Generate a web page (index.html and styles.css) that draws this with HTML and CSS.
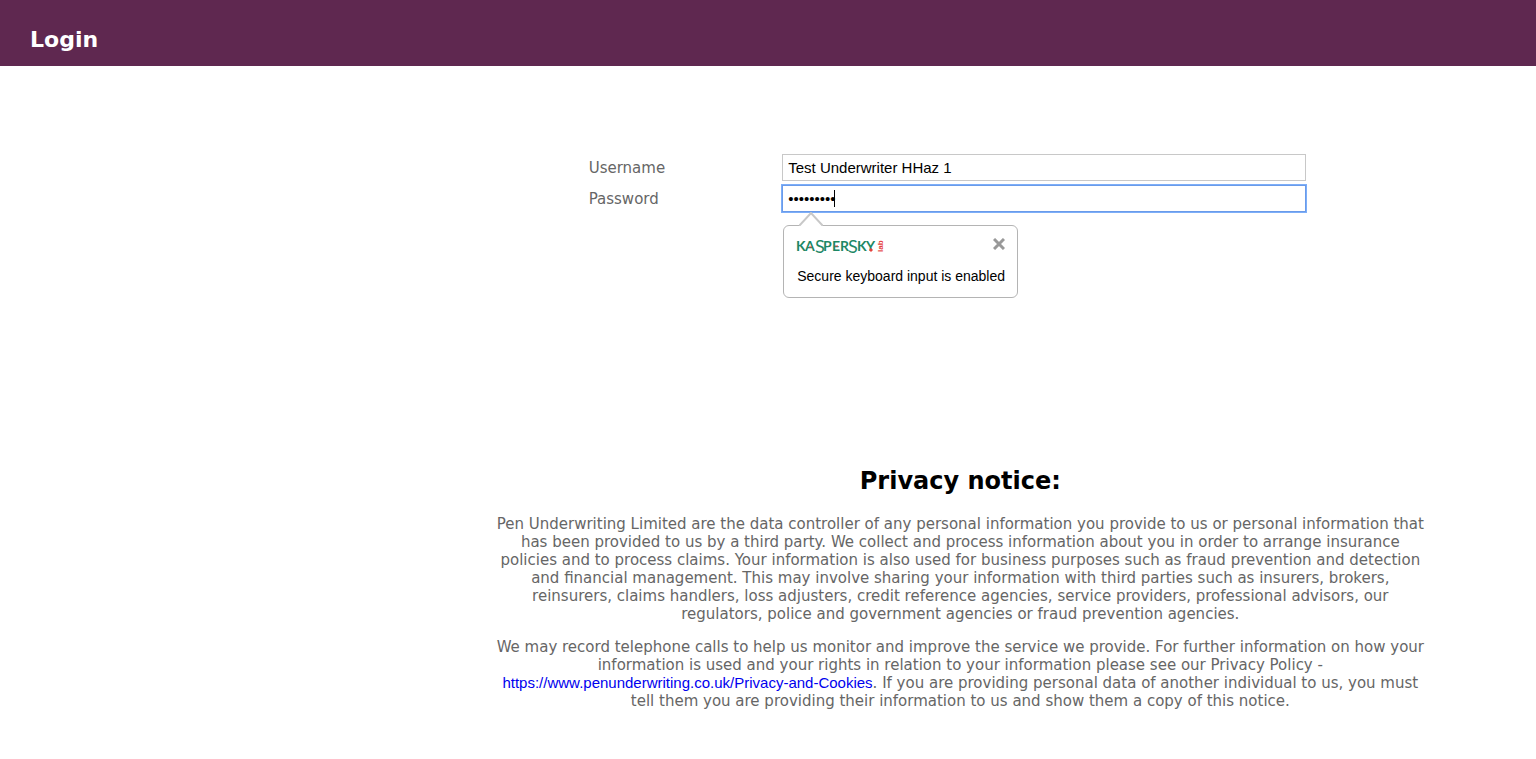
FILE: index.html
```html
<!DOCTYPE html>
<html lang="en">
<head>
<meta charset="utf-8">
<title>Login</title>
<link rel="stylesheet" href="styles.css">
</head>
<body>
<header class="banner">
  <h1 class="banner-title">Login</h1>
</header>
<main class="content">
  <form class="login-form">
    <label class="field-label" for="username">Username</label>
    <input class="field-input" id="username" type="text" value="Test Underwriter HHaz 1">
    <label class="field-label" for="password">Password</label>
    <div class="password-field">
      <input class="field-input field-input-active" id="password" type="password" value="password1">
      <span class="caret" aria-hidden="true"></span>
      <div class="tooltip" role="status">
        <svg class="tooltip-arrow" viewBox="0 0 24 14" aria-hidden="true">
          <path d="M0 14 L12 1 L24 14" fill="#fff" stroke="#c8c8c8" stroke-width="2"/>
        </svg>
        <div class="tooltip-head">
          <svg class="tooltip-logo" viewBox="0 0 90 22" role="img" aria-label="Kaspersky Lab">
            <text class="logo-letters" y="17"><tspan x="-1 8">KA</tspan><tspan class="logo-tall" x="18" y="19">S</tspan><tspan x="26 35 43" y="17">PER</tspan><tspan class="logo-tall" x="51" y="19">S</tspan><tspan x="60 69" y="17">KY</tspan></text>
            <path d="M12 13h3M38 12h3M73 15h2v2h-2z" fill="#e5403c" stroke="#e5403c"/>
            <text class="logo-lab" transform="translate(86 18) rotate(-90)">lab</text>
          </svg>
          <button class="tooltip-close" type="button" aria-label="Close">
            <svg class="close-icon" viewBox="0 0 12 12" aria-hidden="true">
              <path d="M1 1l10 10M11 1l-10 10" stroke="#999" stroke-width="3"/>
            </svg>
          </button>
        </div>
        <p class="tooltip-text">Secure keyboard input is enabled</p>
      </div>
    </div>
  </form>
  <section class="privacy">
    <h2 class="privacy-title">Privacy notice:</h2>
    <p class="privacy-text">Pen Underwriting Limited are the data controller of any personal information you provide to us or personal information that has been provided to us by a third party. We collect and process information about you in order to arrange insurance policies and to process claims. Your information is also used for business purposes such as fraud prevention and detection and financial management. This may involve sharing your information with third parties such as insurers, brokers, reinsurers, claims handlers, loss adjusters, credit reference agencies, service providers, professional advisors, our regulators, police and government agencies or fraud prevention agencies.</p>
    <p class="privacy-text">We may record telephone calls to help us monitor and improve the service we provide. For further information on how your information is used and your rights in relation to your information please see our Privacy Policy - <a class="privacy-link" href="https://www.penunderwriting.co.uk/Privacy-and-Cookies">https://www.penunderwriting.co.uk/Privacy-and-Cookies</a>. If you are providing personal data of another individual to us, you must tell them you are providing their information to us and show them a copy of this notice.</p>
  </section>
</main>
</body>
</html>
```
FILE: styles.css
```css
* {
  box-sizing: border-box;
}

body {
  margin: 0;
  background: #fff;
  color: #666;
  font-family: Verdana, "DejaVu Sans", sans-serif;
  font-size: 15px;
  line-height: 18px;
}

.banner {
  padding: 24px 30px 10px;
  background: #5f2850;
}

.banner-title {
  margin: 0;
  color: #fff;
  font-size: 22px;
  line-height: 32px;
}

.content {
  padding-top: 88px;
}

.login-form {
  display: grid;
  grid-template-columns: 27% 73%;
  row-gap: 4px;
  align-items: center;
  width: 47%;
  margin-left: 38%;
  padding-left: 5px;
}

.field-label {
  color: #666;
}

.field-input {
  display: block;
  width: 100%;
  height: 27px;
  padding: 0 5px;
  border: 1px solid #c8c8c8;
  border-radius: 0;
  background: #fff;
  color: #000;
  font-family: "Liberation Sans", Arial, sans-serif;
  font-size: 15px;
  outline: none;
}

.field-input-active {
  border-color: #6a9bea;
  box-shadow: 0 0 0 1px #7daef8;
}

.password-field {
  position: relative;
}

.caret {
  position: absolute;
  top: 5px;
  left: 52px;
  width: 1px;
  height: 17px;
  background: #000;
}

.tooltip {
  position: absolute;
  top: 40px;
  left: 1px;
  padding: 8px 12px 12px 13px;
  border: 1px solid #b4b4b4;
  border-radius: 6px;
  background: #fff;
  color: #000;
  font-family: "Liberation Sans", Arial, sans-serif;
  font-size: 14px;
  white-space: nowrap;
}

.tooltip-arrow {
  position: absolute;
  top: -14px;
  left: 15px;
  width: 24px;
  height: 14px;
}

.tooltip-head {
  display: flex;
  justify-content: space-between;
  align-items: flex-start;
}

.tooltip-logo {
  width: 90px;
  height: 22px;
  overflow: visible;
}

.logo-letters {
  fill: #1d8865;
  font-size: 14px;
  font-weight: bold;
  font-family: Lato, sans-serif;
}

.logo-tall {
  font-size: 18px;
  font-weight: normal;
}

.logo-lab {
  fill: #e5403c;
  font-size: 8px;
  font-weight: bold;
}

.tooltip-close {
  display: flex;
  margin: 4px 0 0;
  padding: 0;
  border: 0;
  background: none;
}

.close-icon {
  width: 12px;
  height: 12px;
}

.tooltip-text {
  margin: 11px 0 0;
  line-height: 18px;
}

.privacy {
  width: 62%;
  margin: 251px 0 0 31%;
  padding: 0 0 0 16px;
  text-align: center;
}

.privacy-title {
  margin: 0 0 16px;
  color: #000;
  font-size: 24px;
  line-height: 36px;
}

.privacy-text {
  margin: 0 0 15px;
}

.privacy-link {
  color: #00e;
  font-family: "Liberation Sans", Arial, sans-serif;
  text-decoration: none;
}
```
